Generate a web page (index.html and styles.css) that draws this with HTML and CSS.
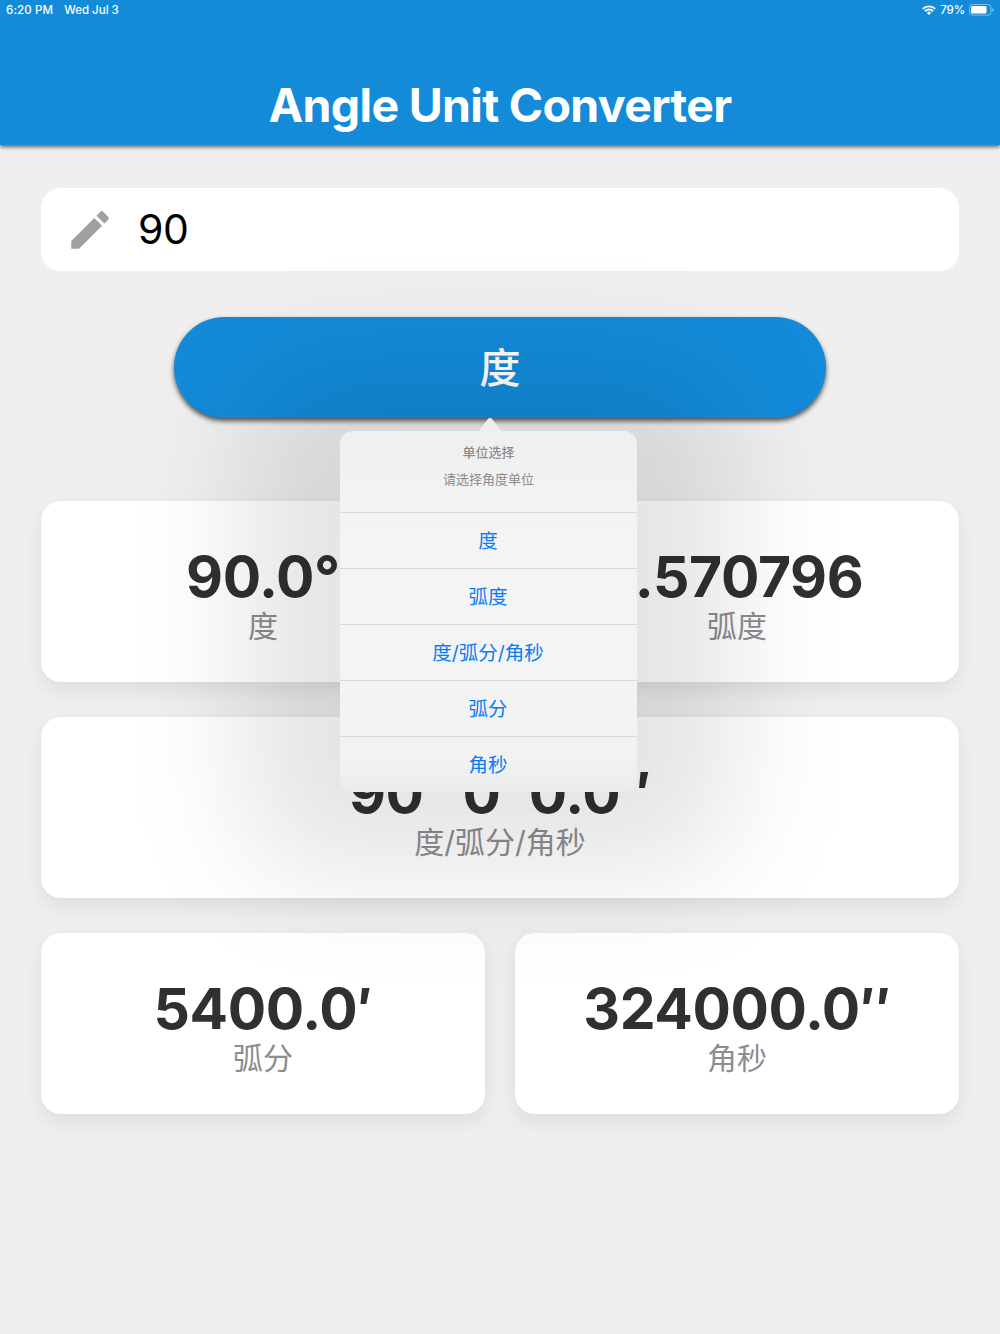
FILE: index.html
```html
<!DOCTYPE html>
<html lang="zh-CN">
<head>
    <meta charset="UTF-8">
    <meta name="viewport" content="width=device-width, initial-scale=1.0">
    <title>Angle Unit Converter</title>
    <link rel="stylesheet" href="styles.css">
</head>
<body>

<header class="header">
    <div class="status-bar">
        <span class="status-time">6:20 PM</span>
        <span class="status-date">Wed Jul 3</span>
        <div class="status-right">
            <svg class="wifi" width="14" height="10" viewBox="0 0 14 10">
                <path d="M.8 3.900a8.800 8.800 0 0 1 12.400 0M3 6.200a5.700 5.700 0 0 1 8 0" fill="none" stroke="#fff" stroke-width="1.9"/>
                <path d="M7 9.900 4.800 7.700a3.200 3.200 0 0 1 4.400 0z" fill="#fff"/>
            </svg>
            <span class="status-percent">79%</span>
            <svg class="battery" width="25" height="12" viewBox="0 0 25 12">
                <rect x=".5" y=".5" width="21.5" height="10.6" rx="3" fill="none" stroke="#fff" stroke-opacity=".45"/>
                <rect x="2" y="2" width="15.5" height="7.6" rx="1.6" fill="#fff"/>
                <path d="M23.3 4v3.8q1.4-.6 1.4-1.9T23.3 4z" fill="#fff" fill-opacity=".5"/>
            </svg>
        </div>
    </div>
    <h1>Angle Unit Converter</h1>
</header>

<main class="container">
    <div class="input-box">
        <svg class="pencil" width="50" height="50" viewBox="0 0 24 24">
            <path d="M3 17.25V21h3.75L17.81 9.94l-3.75-3.75L3 17.25zM20.71 7.04a1 1 0 0 0 0-1.41l-2.34-2.34a1 1 0 0 0-1.41 0l-1.83 1.83 3.75 3.75 1.83-1.83z" fill="#a0a0a0"/>
        </svg>
        <input type="text" class="angle-input" value="90" aria-label="角度">
    </div>

    <div class="unit-picker">
        <button type="button" class="unit-button">度</button>

        <!-- Unit selection menu -->
        <div class="popover">
            <svg class="popover-arrow" width="30" height="14" viewBox="0 0 30 14">
                <path d="M0 14C4 14 4.700 12 6.500 9.500L12.500 1.500Q15-1.300 17.500 1.500L23.500 9.500C25.300 12 26 14 30 14z" fill="#efefef"/>
            </svg>
            <div class="popover-body">
                <div class="popover-header">
                    <div class="popover-title">单位选择</div>
                    <div class="popover-message">请选择角度单位</div>
                </div>
                <button type="button" class="option">度</button>
                <button type="button" class="option">弧度</button>
                <button type="button" class="option">度/弧分/角秒</button>
                <button type="button" class="option">弧分</button>
                <button type="button" class="option">角秒</button>
            </div>
        </div>
    </div>

    <div class="results">
        <div class="card">
            <div class="value">90.0°</div>
            <div class="unit">度</div>
        </div>
        <div class="card">
            <div class="value">1.570796</div>
            <div class="unit">弧度</div>
        </div>
        <div class="card wide">
            <div class="value">90° 0′ 0.0″</div>
            <div class="unit">度/弧分/角秒</div>
        </div>
        <div class="card">
            <div class="value">5400.0′</div>
            <div class="unit">弧分</div>
        </div>
        <div class="card">
            <div class="value">324000.0″</div>
            <div class="unit">角秒</div>
        </div>
    </div>
</main>

</body>
</html>
```
FILE: styles.css
```css
* {
    box-sizing: border-box;
}

body {
    margin: 0;
    min-height: 100vh;
    overflow: hidden;
    background-color: #efefef;
    font-family: Inter, "Noto Sans CJK SC", sans-serif;
}

.header {
    height: 145px;
    background-color: #138bd9;
    color: #fff;
    box-shadow: 0 2px 4px rgba(0, 0, 0, 0.6);
}

.status-bar {
    display: flex;
    align-items: center;
    height: 19px;
    padding: 0 6px 0 6px;
    font-size: 11.5px;
    font-weight: 500;
    letter-spacing: 0.15px;
}

.status-date {
    margin-left: 11px;
    letter-spacing: 0;
}

.status-right {
    display: flex;
    align-items: center;
    gap: 4px;
    margin-left: auto;
}

.status-percent {
    letter-spacing: -0.1px;
}

h1 {
    margin: 58px 0 0;
    text-align: center;
    font-size: 46.5px;
    line-height: 56px;
    font-weight: 700;
    letter-spacing: -0.7px;
}

.container {
    padding: 43px 41px 0;
}

.input-box {
    display: flex;
    align-items: center;
    height: 83px;
    padding-left: 24px;
    border-radius: 20px;
    background-color: #fff;
}

.angle-input {
    flex: 1;
    margin-left: 23px;
    padding: 0 0 1px;
    border: none;
    outline: none;
    background: none;
    color: #000;
    font-family: inherit;
    font-size: 41px;
    letter-spacing: -0.4px;
}

.unit-picker {
    position: relative;
    width: 652px;
    margin: 46px auto 83px;
}

.unit-button {
    display: block;
    width: 100%;
    height: 101px;
    padding: 0 0 6px;
    border: none;
    border-radius: 51px;
    background-color: #138bd9;
    box-shadow: 0 3px 5px rgba(0, 0, 0, 0.65);
    color: #fff;
    font-family: inherit;
    font-size: 41px;
    font-weight: 500;
}

.popover {
    position: absolute;
    z-index: 1;
    top: 114px;
    left: 166px;
    width: 297px;
    text-align: center;
}

/* Wide soft shadow behind the menu */
.popover::before {
    content: "";
    position: absolute;
    z-index: -1;
    inset: -66px -98px -82px;
    border-radius: 80px;
    background-color: rgba(0, 0, 0, 0.1);
    filter: blur(56px);
}

.popover-arrow {
    position: absolute;
    top: -13px;
    left: 135px;
}

.popover-body {
    border-radius: 13px;
    background: linear-gradient(#efefef, #f4f4f4 30%, #f4f4f4 65%, #f2f2f2 90%, #ececec);
}

.popover-header {
    height: 81px;
    padding-top: 11px;
    color: #8b8b8b;
    font-size: 13px;
    line-height: 20px;
}

.popover-title {
    font-weight: 500;
}

.popover-message {
    margin-top: 7px;
}

.option {
    display: block;
    width: 100%;
    height: 56px;
    padding: 0 1px 2px 0;
    border: none;
    border-top: 1px solid #d8d8d8;
    background: none;
    color: #087cf7;
    font-family: inherit;
    font-size: 19.5px;
    font-weight: 400;
}

.results {
    display: grid;
    grid-template-columns: 1fr 1fr;
    gap: 35px 30px;
}

.card {
    height: 181px;
    padding-top: 46px;
    border-radius: 20px;
    background-color: #fff;
    box-shadow: 0 8px 20px rgba(0, 0, 0, 0.08);
    text-align: center;
}

.wide {
    grid-column: span 2;
}

.value {
    color: #303030;
    font-size: 57px;
    line-height: 60px;
    font-weight: 700;
    letter-spacing: -0.4px;
    white-space: nowrap;
}

.unit {
    color: #8d8d90;
    font-size: 30px;
    line-height: 38px;
}
```
